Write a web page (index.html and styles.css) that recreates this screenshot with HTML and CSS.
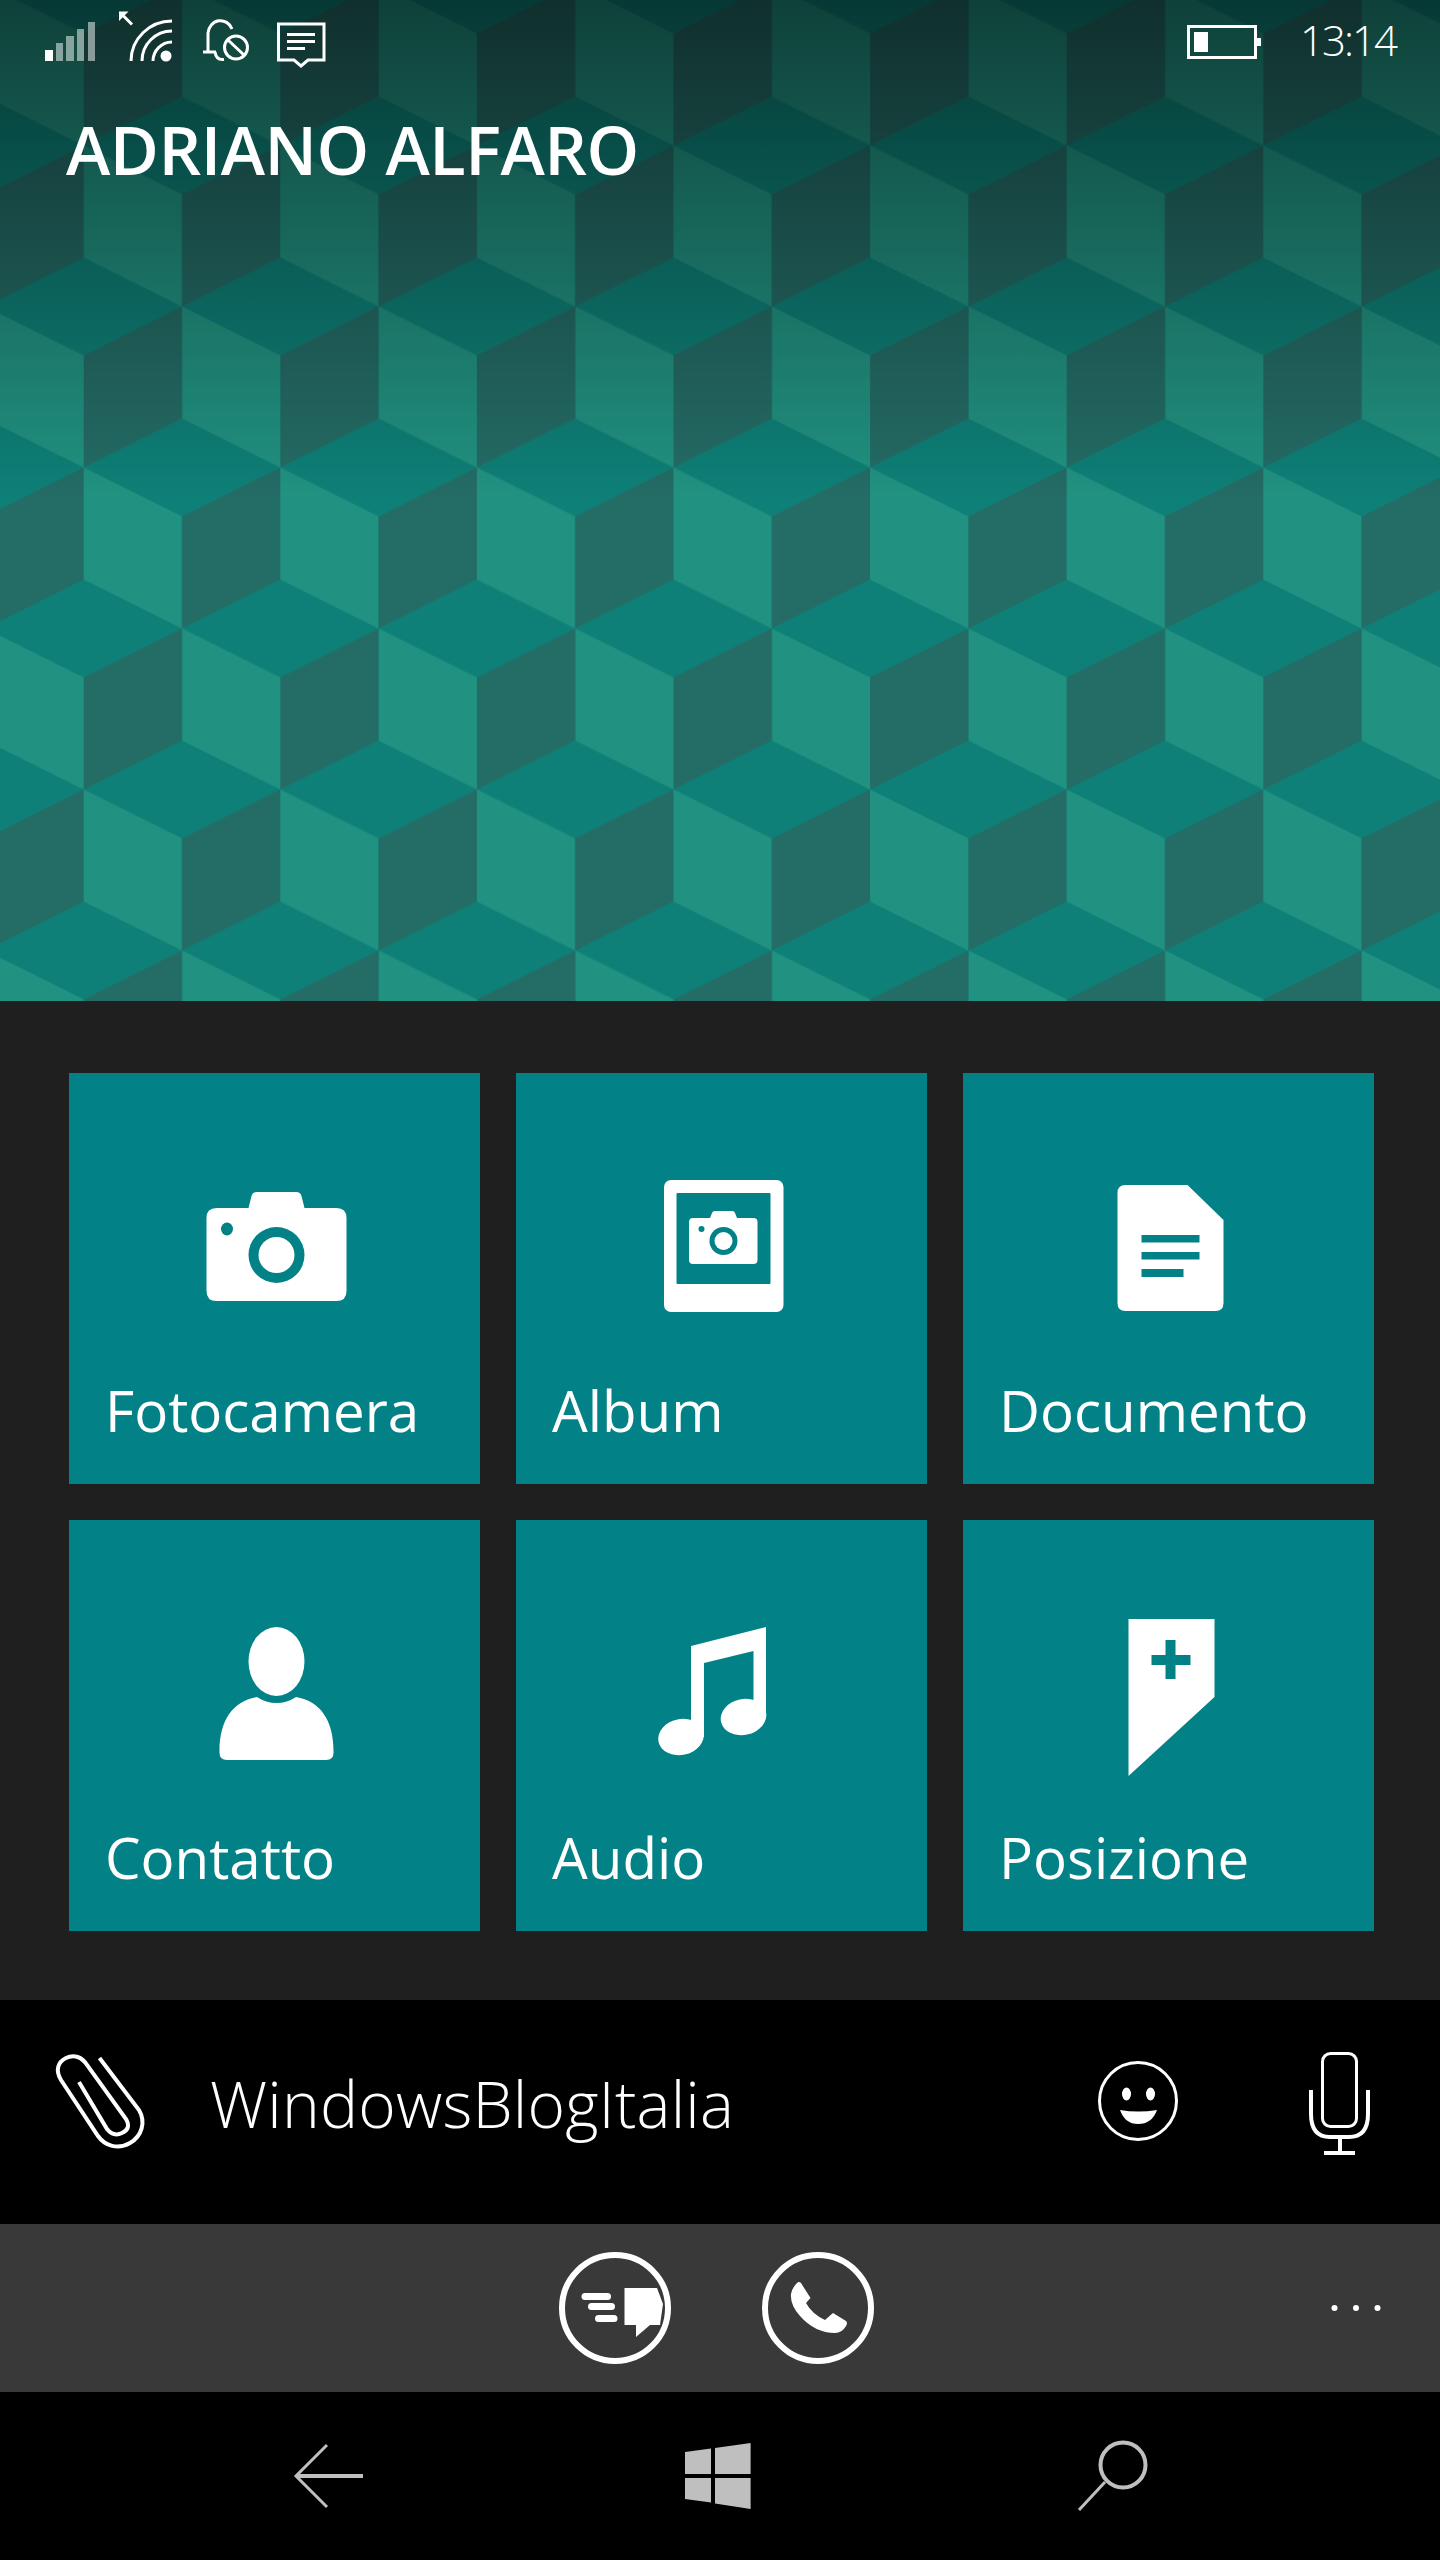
FILE: index.html
```html
<!DOCTYPE html>
<html lang="it">
<head>
<meta charset="utf-8">
<title>Adriano Alfaro</title>
<link rel="stylesheet" href="styles.css">
</head>
<body>
<div class="phone">
  <header class="hero">
    <svg class="cubes" width="1440" height="1001" aria-hidden="true">
      <defs>
        <pattern id="cube" width="196.6" height="322" patternUnits="userSpaceOnUse" patternTransform="translate(83.7 95.5)">
          <rect class="f-top" width="197" height="322"/>
          <polygon class="f-light" points="0,50 98.3,99 98.3,211 0,162"/>
          <polygon class="f-dark" points="98.3,99 196.6,50 196.6,162 98.3,211"/>
          <polygon class="f-light" points="98.3,211 196.6,260 196.6,372 98.3,323"/>
          <polygon class="f-dark" points="0,260 98.3,211 98.3,323 0,372"/>
          <polygon class="f-light" points="98.3,-111 196.6,-62 196.6,50 98.3,1"/>
          <polygon class="f-dark" points="0,-62 98.3,-111 98.3,1 0,50"/>
        </pattern>
        <linearGradient id="shade" x1="0" y1="0" x2="0" y2="1">
          <stop offset="0" stop-color="#000" stop-opacity=".56"/>
          <stop offset=".5" stop-color="#000" stop-opacity="0"/>
        </linearGradient>
      </defs>
      <rect width="1440" height="1001" fill="url(#cube)"/>
      <rect width="1440" height="1001" fill="url(#shade)"/>
    </svg>
    <div class="hero-content">
      <div class="status">
        <svg class="status-left" viewBox="40 8 290 64" width="290" height="64" aria-hidden="true">
          <rect class="w" x="45" y="50" width="8" height="11"/>
          <g class="dim">
            <rect x="56" y="43" width="7" height="18"/>
            <rect x="66" y="36" width="8" height="25"/>
            <rect x="77" y="29" width="7" height="32"/>
            <rect x="88" y="22" width="7" height="39"/>
          </g>
          <path class="s3" d="M132 24.500 L122 14.500"/>
          <path class="w" d="M119 11.500 H128.500 L119 21Z"/>
          <path class="s3" d="M131 61 A41 40 0 0 1 172 21 M142 61 A30 30 0 0 1 172 31 M153 61 A19 19 0 0 1 172 42"/>
          <circle class="w" cx="166" cy="56" r="5.500"/>
          <path class="s3" d="M203 52 H216 M208 52 V33 A12.500 13.500 0 0 1 232 29 M215 52 C216 59 220 60 224 59.500"/>
          <circle class="s3" cx="236" cy="47.500" r="11.500"/>
          <path class="s3" d="M228 40 L244 55"/>
          <path class="s3" d="M278.500 24 H324 V60 H308 L301 66 L294 60 H278.500Z"/>
          <path class="s3" d="M287 34.500 H315 M287 41.500 H315 M287 48.500 H305"/>
        </svg>
        <div class="status-right">
          <svg viewBox="1186 23 78 38" width="78" height="38" aria-hidden="true">
            <rect class="s3" x="1189.500" y="26.500" width="67" height="31"/>
            <rect class="w" x="1195" y="32" width="14" height="20"/>
            <rect class="w" x="1258" y="38" width="4" height="8"/>
          </svg>
          <span class="time">13:14</span>
        </div>
      </div>
      <h1 class="title">ADRIANO ALFARO</h1>
    </div>
  </header>

  <section class="panel">
    <div class="grid">
      <div class="tile">
        <svg class="tile-icon" viewBox="0 0 160 160" aria-hidden="true">
          <path class="w" d="M21.500 39 H53.500 L56.500 27 Q57.500 23 62 23 H101 Q105.500 23 106.500 27 L109.500 39 H141.500 Q151.500 39 151.500 49 V122 Q151.500 132 141.500 132 H21.500 Q11.500 132 11.500 122 V49 Q11.500 39 21.500 39Z"/>
          <circle class="t" cx="81.500" cy="86" r="28"/>
          <circle class="w" cx="81.500" cy="86" r="18"/>
          <ellipse class="t" cx="32" cy="60" rx="6" ry="6.500"/>
        </svg>
        <span class="label">Fotocamera</span>
      </div>
      <div class="tile">
        <svg class="tile-icon" viewBox="0 0 160 160" aria-hidden="true">
          <rect class="w" x="22" y="11" width="119.500" height="132" rx="7"/>
          <rect class="t" x="34.500" y="24" width="94" height="91" rx="1"/>
          <path class="w" d="M51 49 H68 L70 44 Q70.500 42 73 42 H90 Q92.500 42 93 44 L95 49 H111.500 Q115.500 49 115.500 53 V91 Q115.500 95 111.500 95 H51 Q47 95 47 91 V53 Q47 49 51 49Z"/>
          <circle class="t" cx="81.500" cy="72" r="14"/>
          <circle class="w" cx="81.500" cy="72" r="9"/>
          <circle class="t" cx="59.500" cy="60" r="3"/>
        </svg>
        <span class="label">Album</span>
      </div>
      <div class="tile">
        <svg class="tile-icon" viewBox="0 0 160 160" aria-hidden="true">
          <path class="w" d="M36.500 16 H98.500 L134.500 51 V134 Q134.500 142 126.500 142 H36.500 Q28.500 142 28.500 134 V24 Q28.500 16 36.500 16Z"/>
          <rect class="t" x="52.500" y="66" width="58" height="7.500"/>
          <rect class="t" x="52.500" y="83" width="58" height="7.500"/>
          <rect class="t" x="52.500" y="100" width="42" height="8"/>
        </svg>
        <span class="label">Documento</span>
      </div>
      <div class="tile">
        <svg class="tile-icon" viewBox="0 0 160 160" aria-hidden="true">
          <ellipse class="w" cx="81.500" cy="45.500" rx="28" ry="34.500"/>
          <path class="w" d="M62 81 C38 85 24.500 104 24.500 135 V137 Q24.500 144 32 144 H131 Q138.500 144 138.500 137 V135 C138.500 104 125 85 101 81 Q92 87 81.500 87 Q71 87 62 81Z"/>
        </svg>
        <span class="label">Contatto</span>
      </div>
      <div class="tile">
        <svg class="tile-icon" viewBox="0 0 160 160" aria-hidden="true">
          <path class="w" d="M49 30 L124 11 V102 H111.500 V35 L62 47 V121 H49Z"/>
          <ellipse class="w" cx="39" cy="121" rx="23" ry="18" transform="rotate(-12 39 121)"/>
          <ellipse class="w" cx="101.500" cy="101" rx="23" ry="18" transform="rotate(-12 101.500 101)"/>
        </svg>
        <span class="label">Audio</span>
      </div>
      <div class="tile">
        <svg class="tile-icon" viewBox="0 0 160 160" aria-hidden="true">
          <polygon class="w" points="39.500,3 125.500,3 125.500,81 39.500,160"/>
          <rect class="t" x="62.500" y="39" width="39" height="10"/>
          <rect class="t" x="76.500" y="24" width="10" height="39"/>
        </svg>
        <span class="label">Posizione</span>
      </div>
    </div>
  </section>

  <section class="composer">
    <svg class="clip" viewBox="52 2050 100 104" width="100" height="104" aria-hidden="true">
      <path class="s4" d="M99.500 2058 L139 2110 C146 2122 142 2136 130 2143 C118 2150 105 2146 98 2136 L61 2080 C55 2070 58 2062 66 2058 C74 2054 82 2057 87 2065 L126 2119 C130 2126 128 2130 122 2133 C116 2136 111 2134 107 2129 L79 2082"/>
    </svg>
    <span class="message">WindowsBlogItalia</span>
    <svg class="smile" viewBox="1095 2058 86 86" width="86" height="86" aria-hidden="true">
      <circle class="s3" cx="1138" cy="2101" r="38.500"/>
      <ellipse class="w" cx="1126.500" cy="2094" rx="4.500" ry="6.500"/>
      <ellipse class="w" cx="1150.500" cy="2094" rx="4.500" ry="6.500"/>
      <path class="w" d="M1120 2110 Q1138 2113 1157 2110 Q1152 2124 1138 2124 Q1125 2124 1120 2110Z"/>
    </svg>
    <svg class="mic" viewBox="1305 2050 70 108" width="70" height="108" aria-hidden="true">
      <rect class="s3" x="1322.500" y="2053.500" width="34" height="73" rx="8"/>
      <path class="s4" d="M1311 2090 V2114 Q1311 2137 1330 2137 H1349 Q1368 2137 1368 2114 V2090"/>
      <path class="s4" d="M1340 2137 V2152 M1324 2153 H1355"/>
    </svg>
  </section>

  <nav class="appbar">
    <svg class="round" viewBox="555 2248 120 120" width="120" height="120" aria-hidden="true">
      <circle class="s5" cx="615" cy="2308" r="53"/>
      <rect class="w" x="581.500" y="2293" width="29.500" height="7" rx="3.500"/>
      <rect class="w" x="588" y="2303" width="27" height="7" rx="3.500"/>
      <rect class="w" x="595" y="2315" width="22.500" height="7" rx="3.500"/>
      <path class="w" d="M624.500 2288 H657 L663 2304 L660 2325 H650 L636 2337 V2325 H624.500Z"/>
    </svg>
    <svg class="round call" viewBox="758 2248 120 120" width="120" height="120" aria-hidden="true">
      <circle class="s5" cx="818" cy="2308" r="53"/>
      <path class="w" d="M797 2283 Q799 2281 801 2283 L810.500 2298 L806 2303 Q812 2314 825 2320 L833 2313 L846 2321 Q848 2323 846 2326 Q842 2333 835 2333 Q815 2333 800 2316 Q790 2305 791 2294 Q792 2288 797 2283Z"/>
    </svg>
    <svg class="dots" viewBox="1330 2303 52 10" width="52" height="10" aria-hidden="true">
      <circle class="w" cx="1334.500" cy="2308" r="3"/>
      <circle class="w" cx="1356" cy="2308" r="3"/>
      <circle class="w" cx="1377.500" cy="2308" r="3"/>
    </svg>
  </nav>

  <footer class="navbar">
    <svg class="back" viewBox="290 2440 78 72" width="78" height="72" aria-hidden="true">
      <path class="g3" d="M327 2445 L296 2476 L327 2507"/>
      <path class="g4" d="M296 2476 H363"/>
    </svg>
    <svg class="win" viewBox="680 2438 75 72" width="75" height="72" aria-hidden="true">
      <polygon class="g" points="685,2450 711,2446.500 711,2472 685,2472"/>
      <polygon class="g" points="715,2446 750.600,2441 750.600,2472 715,2472"/>
      <polygon class="g" points="685,2476 711,2476 711,2500.500 685,2497"/>
      <polygon class="g" points="715,2476 750.600,2476 750.600,2507 715,2501.500"/>
    </svg>
    <svg class="search" viewBox="1075 2438 77 76" width="77" height="76" aria-hidden="true">
      <circle class="g4" cx="1123" cy="2465" r="22.500"/>
      <path class="g3" d="M1105 2482 L1079 2510"/>
    </svg>
  </footer>
</div>
</body>
</html>
```
FILE: styles.css
```css
* { box-sizing: border-box; }
html, body { margin: 0; padding: 0; background: #000; }
body { font-family: "Open Sans", "Noto Sans", "Liberation Sans", sans-serif; color: #fff; }
.phone { width: 1440px; height: 2560px; display: flex; flex-direction: column; overflow: hidden; }
svg { display: block; flex: none; }

.w { fill: #fff; }
.t { fill: #028187; }
.g { fill: #bfbfbf; }
.dim { fill: rgba(255,255,255,.5); }
.s3, .s4, .s5 { fill: none; stroke: #fff; }
.s3 { stroke-width: 3; }
.s4 { stroke-width: 4; }
.s5 { stroke-width: 6; }
.g3, .g4 { fill: none; stroke: #bfbfbf; }
.g3 { stroke-width: 3; }
.g4 { stroke-width: 4; }

.hero { height: 1001px; display: grid; }
.hero > * { grid-area: 1 / 1; }
.f-top { fill: #0e8077; }
.f-light { fill: #219281; }
.f-dark { fill: #246c66; }
.hero-content { display: flex; flex-direction: column; }
.status { display: flex; justify-content: space-between; padding: 8px 44px 0 40px; height: 105px; }
.status-right { display: flex; gap: 37px; height: 64px; padding-top: 15px; }
.time { font-weight: 350; font-size: 42px; line-height: 54px; margin-top: -10px; letter-spacing: -2px; }
.title { margin: 0 0 0 66px; font-size: 67px; line-height: 88px; font-weight: 600; letter-spacing: -.5px; }

.panel { height: 999px; background: #1f1f1f; padding: 72px 66px 0 69px; }
.grid { display: grid; grid-template-columns: repeat(3, 411px); grid-auto-rows: 411px; gap: 36px; }
.tile { background: #028187; display: flex; flex-direction: column; padding-top: 96px; }
.tile-icon { width: 160px; height: 160px; margin: 0 auto; }
.label { margin: 44px 0 0 36px; font-size: 56.5px; line-height: 76px; font-weight: 400; }

.composer { height: 224px; display: flex; align-items: flex-start; padding: 50px 65px 0 52px; }
.message { margin: 10px 0 0 58px; font-size: 64px; line-height: 88px; font-weight: 350; letter-spacing: .2px; }
.smile { margin: 8px 0 0 auto; }
.mic { margin-left: 124px; }

.appbar { height: 168px; background: #393939; display: flex; align-items: center; padding: 0 58px 0 555px; }
.call { margin-left: 83px; }
.dots { margin-left: auto; }

.navbar { height: 168px; background: #000; display: flex; align-items: center; padding-left: 290px; }
.win { margin-left: 312px; }
.search { margin-left: 320px; }
```
